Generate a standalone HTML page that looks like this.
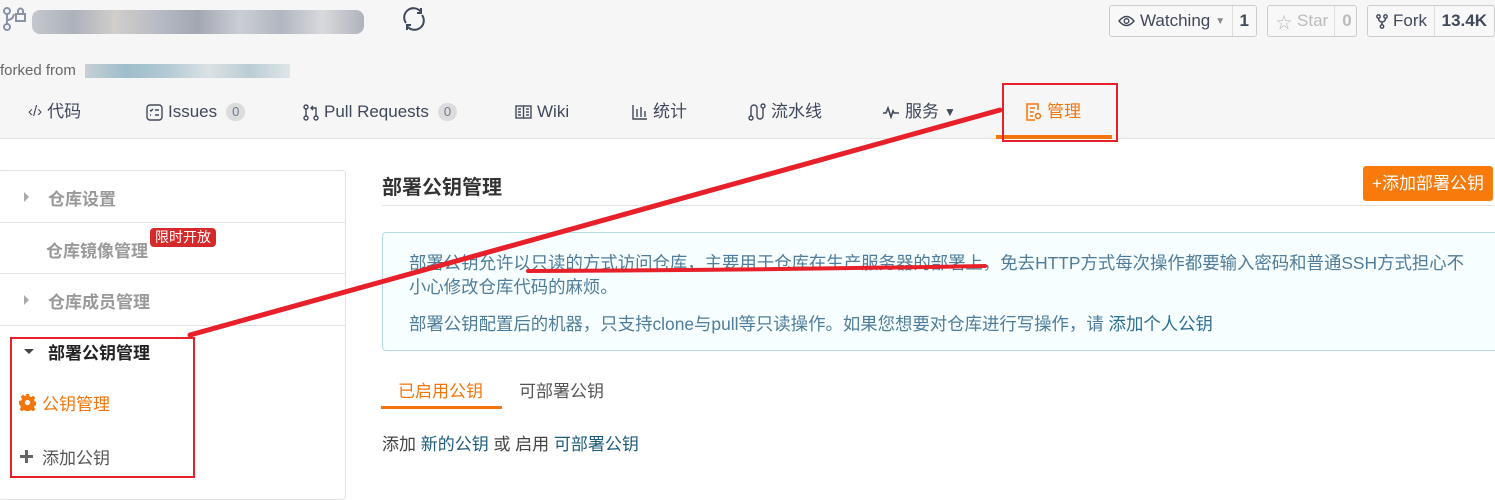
<!DOCTYPE html>
<html><head><meta charset="utf-8"><style>
*{box-sizing:border-box;margin:0;padding:0}
body{width:1495px;height:488px;overflow:hidden;background:#fff;font-family:"Liberation Sans","Noto Sans CJK SC",sans-serif;color:#40485b;position:relative}
.a{position:absolute;white-space:nowrap}
.top{position:absolute;left:0;top:0;width:1495px;height:139px;background:#f6f6f6;border-bottom:1px solid #e3e3e3}
.btn{position:absolute;top:5px;height:32px;border:1px solid #ccc;border-radius:3px;background:#f8f8f8;font-size:17px;display:flex;align-items:center;white-space:nowrap}
.btn .l{padding:0 6px 0 8px;display:flex;align-items:center;gap:5px;flex:1}
.btn .c{border-left:1px solid #ddd;height:100%;display:flex;align-items:center;padding:0 7px;font-weight:bold}
.nav{position:absolute;top:100px;height:24px;line-height:24px;font-size:17px;display:flex;align-items:center;gap:5px;white-space:nowrap}
.badge{display:inline-block;background:#dcdcdc;color:#6b7a90;border-radius:10px;font-size:13px;line-height:18px;padding:0 6px;margin-left:4px}
.side{position:absolute;left:-2px;top:170px;width:348px;height:330px;border:1px solid #e3e3e3;border-radius:4px}
.row{position:absolute;left:0;width:346px;border-bottom:1px solid #e3e3e3}
.sl{font-size:17px;color:#999;font-weight:bold}
.tri{position:absolute;width:0;height:0;border-top:5px solid transparent;border-bottom:5px solid transparent;border-left:5px solid #aaa}
.info{position:absolute;left:382px;top:232px;width:1120px;height:119px;background:#f6feff;border:1px solid #b5dbe3;border-radius:4px;color:#4f7c99;font-size:17.4px}
.red{position:absolute;border:2px solid #e8202a}
</style></head><body>
<div class="top"></div>
<svg class="a" style="left:2px;top:6px" width="26" height="26" viewBox="0 0 26 26" fill="none" stroke="#8a93a6" stroke-width="2"><circle cx="5" cy="5" r="3"/><circle cx="5" cy="21" r="3"/><path d="M5 8v10M5 14q6 0 7-6"/><rect x="14" y="8" width="9" height="7"/><path d="M16 8V5a2.5 2.5 0 0 1 5 0v3"/></svg>
<div class="a" style="left:32px;top:10px;width:332px;height:24px;background:linear-gradient(90deg,#b8bcc4,#9aa0ac,#c8c4c0,#a8adb8,#8e93a0,#c0c4cc,#a0a6b2,#d0d2d6,#9ca2ae);opacity:.8;border-radius:8px"></div>
<svg class="a" style="left:400px;top:5px" width="28" height="28" viewBox="0 0 28 28" fill="none" stroke="#40485b" stroke-width="2"><path d="M6 18A9 9 0 0 1 21 7M22 10A9 9 0 0 1 7 21"/><path d="M21 3v5h-4M7 25v-5h4"/></svg>
<div class="a" style="left:0;top:62px;font-size:15px;color:#666">forked from</div>
<div class="a" style="left:85px;top:64px;width:205px;height:14px;background:linear-gradient(90deg,#c0c8d0,#8fb3c4,#a6c2ce,#d6dee2,#b0c6ce,#dbe3e6);opacity:.85"></div>

<div class="btn" style="left:1109px;width:148px"><span class="l"><svg width="17" height="12" viewBox="0 0 17 12" fill="none" stroke="#40485b" stroke-width="1.4"><path d="M1 6Q8.5-3 16 6Q8.5 15 1 6z"/><circle cx="8.5" cy="6" r="2.3"/></svg>Watching<span style="font-size:10px;color:#888">▼</span></span><span class="c">1</span></div>
<div class="btn" style="left:1267px;width:90px;color:#bbb"><span class="l"><span style="font-size:16px">☆</span>Star</span><span class="c" style="color:#bbb">0</span></div>
<div class="btn" style="left:1367px;width:128px"><span class="l"><svg width="12" height="15" viewBox="0 0 12 15" fill="none" stroke="#40485b" stroke-width="1.4"><circle cx="2.5" cy="2.5" r="1.7"/><circle cx="9.5" cy="2.5" r="1.7"/><circle cx="6" cy="12.5" r="1.7"/><path d="M2.5 4.5q0 3 3.5 3.5q3.5-.5 3.5-3.5M6 8v3"/></svg>Fork</span><span class="c">13.4K</span></div>

<div class="nav" style="left:28px"><span style="font-size:15px">‹/›</span>代码</div>
<div class="nav" style="left:146px"><svg width="17" height="17" viewBox="0 0 17 17" fill="none" stroke="#40485b" stroke-width="1.4"><rect x="1" y="1" width="15" height="15" rx="3"/><path d="M4 6l1 1 2-2M9 6h4M4 11h1M9 11h4"/></svg>Issues<span class="badge">0</span></div>
<div class="nav" style="left:303px"><svg width="16" height="17" viewBox="0 0 16 17" fill="none" stroke="#40485b" stroke-width="1.4"><circle cx="3" cy="3" r="2"/><circle cx="3" cy="14" r="2"/><circle cx="13" cy="14" r="2"/><path d="M3 5v7M13 12V4H8M10 2L8 4l2 2"/></svg>Pull Requests<span class="badge">0</span></div>
<div class="nav" style="left:515px"><svg width="17" height="14" viewBox="0 0 17 14" fill="none" stroke="#40485b" stroke-width="1.4"><rect x="1" y="1" width="15" height="12"/><path d="M8.5 1v12M3 4h3M3 7h3M3 10h3M11 4h3M11 7h3M11 10h3"/></svg>Wiki</div>
<div class="nav" style="left:632px"><svg width="16" height="16" viewBox="0 0 16 16" fill="none" stroke="#40485b" stroke-width="1.4"><path d="M1 1v14h14M5 5v8M9 3v10M13 7v6"/></svg>统计</div>
<div class="nav" style="left:748px"><svg width="18" height="18" viewBox="0 0 18 18" fill="none" stroke="#40485b" stroke-width="1.4"><circle cx="3" cy="15" r="2"/><circle cx="15" cy="3" r="2"/><path d="M3 13V5a3 3 0 0 1 6 0v8a3 3 0 0 0 6 0V5"/></svg>流水线</div>
<div class="nav" style="left:882px"><svg width="18" height="14" viewBox="0 0 18 14" fill="none" stroke="#40485b" stroke-width="1.6"><path d="M1 8h3l2-5 3 9 2-6 1 2h5"/></svg>服务 <span style="font-size:12px">▼</span></div>
<div class="nav" style="left:1026px;color:#f3750b"><svg width="16" height="18" viewBox="0 0 16 18" fill="none" stroke="#f3750b" stroke-width="1.5"><path d="M12 7V1H1v16h8M4 5h5M4 9h4M4 13h3"/><circle cx="12" cy="13" r="2.5"/></svg>管理</div>
<div class="a" style="left:996px;top:135px;width:116px;height:4px;background:#f3750b"></div>

<div class="side">
<div class="row" style="top:0;height:52px"><i class="tri" style="left:25px;top:21px"></i><span class="a sl" style="left:49px;top:14px">仓库设置</span></div>
<div class="row" style="top:52px;height:51px"><span class="a sl" style="left:47px;top:14px">仓库镜像管理</span><span class="a" style="left:151px;top:5px;background:#d62929;color:#fff;font-size:14px;padding:0 5px;border-radius:4px;line-height:19px">限时开放</span></div>
<div class="row" style="top:103px;height:52px"><i class="tri" style="left:25px;top:21px"></i><span class="a sl" style="left:49px;top:14px">仓库成员管理</span></div>
<i class="tri" style="left:25px;top:178px;border:5px solid transparent;border-top:5px solid #444;border-bottom:0"></i>
<span class="a" style="left:49px;top:168px;font-size:17px;font-weight:bold;color:#222">部署公钥管理</span>
<span class="a" style="left:20px;top:219px;font-size:17px;color:#f3750b;display:flex;align-items:center;gap:6px"><svg width="17" height="17" viewBox="0 0 16 16"><path fill="#f3750b" d="M6.5 0h3l.4 2.2 1.5.7 1.9-1.3 2.1 2.1-1.3 1.9.7 1.5 2.2.4v3l-2.2.4-.7 1.5 1.3 1.9-2.1 2.1-1.9-1.3-1.5.7-.4 2.2h-3l-.4-2.2-1.5-.7-1.9 1.3-2.1-2.1 1.3-1.9-.7-1.5L0 9.5v-3l2.2-.4.7-1.5-1.3-1.9 2.1-2.1 1.9 1.3 1.5-.7z"/><circle cx="8" cy="8" r="2.5" fill="#fff"/></svg>公钥管理</span>
<span class="a" style="left:20px;top:273px;font-size:17px;color:#555;display:flex;align-items:center;gap:8px"><svg width="15" height="15" viewBox="0 0 15 15"><path d="M7.5 1v13M1 7.5h13" stroke="#666" stroke-width="3"/></svg>添加公钥</span>
</div>

<div class="a" style="left:382px;top:171px;font-size:20px;font-weight:bold;color:#333">部署公钥管理</div>
<div class="a" style="left:382px;top:205px;width:1113px;height:1px;background:#e3e3e3"></div>
<div class="a" style="left:1363px;top:166px;width:130px;height:35px;background:#f77a0b;border-radius:3px;color:#fff;font-size:17px;line-height:35px;text-align:center">+添加部署公钥</div>

<div class="info">
<div class="a" style="left:26px;top:18px;line-height:24px">部署公钥允许以只读的方式访问仓库，主要用于仓库在生产服务器的部署上，免去HTTP方式每次操作都要输入密码和普通SSH方式担心不<br>小心修改仓库代码的麻烦。</div>
<div class="a" style="left:26px;top:78px">部署公钥配置后的机器，只支持clone与pull等只读操作。如果您想要对仓库进行写操作，请 <span style="color:#2f6f8f">添加个人公钥</span></div>
</div>

<div class="a" style="left:398px;top:377px;font-size:17px;color:#f3750b">已启用公钥</div>
<div class="a" style="left:381px;top:406px;width:121px;height:3px;background:#f3750b"></div>
<div class="a" style="left:519px;top:377px;font-size:17px;color:#555">可部署公钥</div>
<div class="a" style="left:382px;top:430px;font-size:17px;color:#444">添加 <span style="color:#1e5a7a">新的公钥</span> 或 启用 <span style="color:#1e5a7a">可部署公钥</span></div>

<div class="red" style="left:1002px;top:83px;width:116px;height:59px"></div>
<div class="red" style="left:10px;top:337px;width:185px;height:141px"></div>
<svg class="a" style="left:0;top:0" width="1495" height="488"><path d="M190 335L1000 110" stroke="#e8202a" stroke-width="5" stroke-linecap="round"/><path d="M528 271Q760 270 985 266" stroke="#e8202a" stroke-width="4" stroke-linecap="round" fill="none"/></svg>
</body></html>
